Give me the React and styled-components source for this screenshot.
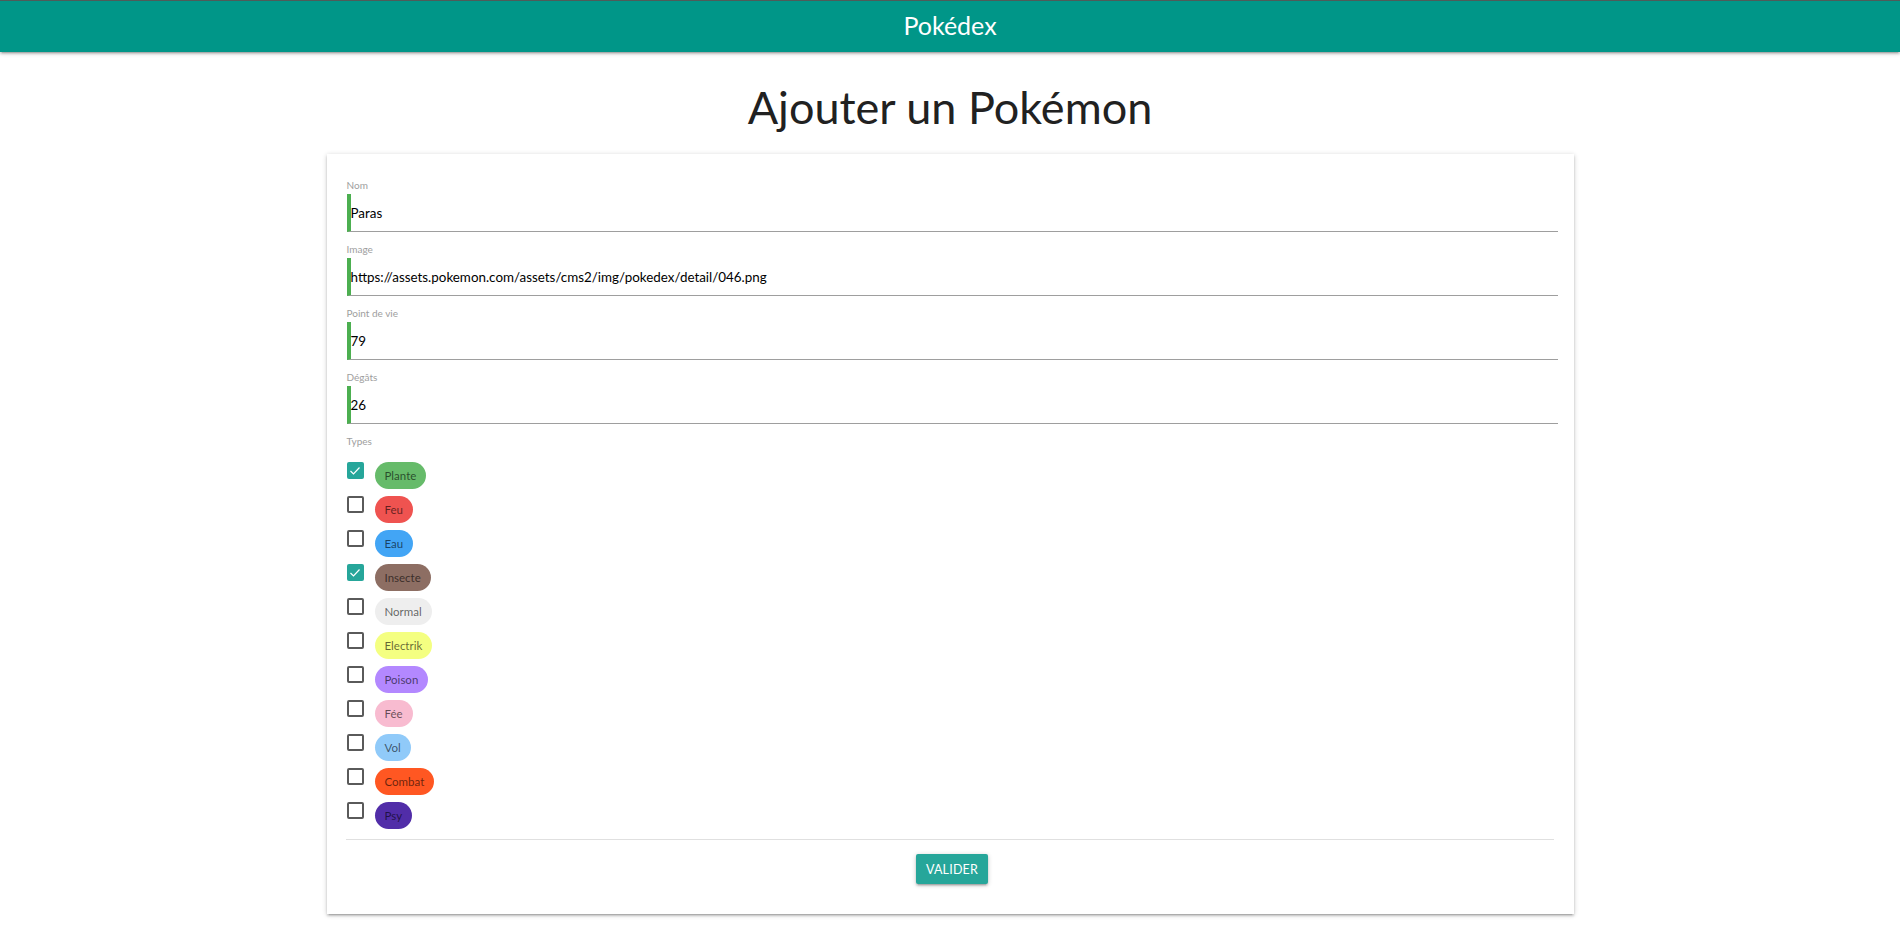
import React from "react";
import styled, { createGlobalStyle } from "styled-components";

const Global = createGlobalStyle`
  html, body { margin: 0; padding: 0; background: #fff; }
  body { font-family: Lato, "Open Sans", sans-serif; color: rgba(0,0,0,0.87); }
  * { box-sizing: border-box; }
`;

const Nav = styled.header`
  height: 52px;
  background: #009688;
  border-top: 1px solid #4e5b59;
  box-shadow: 0 2px 2px 0 rgba(0,0,0,.14), 0 3px 1px -2px rgba(0,0,0,.12), 0 1px 5px 0 rgba(0,0,0,.2);
  display: flex;
  align-items: center;
  justify-content: center;
`;

const Brand = styled.span`
  color: #fff;
  font-size: 25px;
  line-height: 1;
  margin-top: -2px;
`;

const Title = styled.h1`
  margin: 29px 0 20px;
  text-align: center;
  font-size: 45px;
  font-weight: 400;
  line-height: 53px;
  color: #212121;
`;

const Card = styled.form`
  width: 1247px;
  margin: 0 auto 30px;
  background: #fff;
  padding: 24px 16px 30px 20px;
  box-shadow: 0 2px 2px 0 rgba(0,0,0,.14), 0 3px 1px -2px rgba(0,0,0,.12), 0 1px 5px 0 rgba(0,0,0,.2);
`;

const Field = styled.div`
  margin-bottom: 10px;
`;

const Label = styled.div`
  font-size: 10px;
  line-height: 14px;
  color: #9e9e9e;
  margin-bottom: 2px;
`;

const Input = styled.div`
  height: 38px;
  border-left: 4px solid #4caf50;
  border-bottom: 1px solid #9e9e9e;
  display: flex;
  align-items: center;
  font-size: 13.4px;
  color: #000;
  padding-left: 0;
`;

const TypeList = styled.div`
  display: flex;
  flex-direction: column;
  gap: 7px;
  margin-top: 14px;
`;

const TypeRow = styled.label`
  display: flex;
  align-items: flex-start;
  gap: 11px;
`;

const Box = styled.span`
  width: 17px;
  height: 17px;
  border-radius: 2px;
  border: ${(p) => (p.$checked ? "none" : "2px solid #5a5a5a")};
  background: ${(p) => (p.$checked ? "#26a69a" : "transparent")};
  display: flex;
  align-items: center;
  justify-content: center;
`;

const Chip = styled.span`
  height: 27px;
  border-radius: 14px;
  padding: 0 10px;
  background: ${(p) => p.$bg};
  color: rgba(0,0,0,0.6);
  font-size: 11.5px;
  display: flex;
  align-items: center;
`;

const Divider = styled.hr`
  border: none;
  border-top: 1px solid #e0e0e0;
  margin: 10px 4px 0 -1px;
`;

const Footer = styled.div`
  display: flex;
  justify-content: center;
  padding-top: 14px;
`;

const Button = styled.button`
  height: 30px;
  padding: 0 10px;
  border: none;
  border-radius: 2px;
  background: #26a69a;
  color: #fff;
  font-family: inherit;
  font-size: 12.5px;
  text-transform: uppercase;
  letter-spacing: 0.2px;
  box-shadow: 0 2px 2px 0 rgba(0,0,0,.14), 0 3px 1px -2px rgba(0,0,0,.12), 0 1px 5px 0 rgba(0,0,0,.2);
`;

const fields = [
  ["Nom", "Paras"],
  ["Image", "https://assets.pokemon.com/assets/cms2/img/pokedex/detail/046.png"],
  ["Point de vie", "79"],
  ["Dégâts", "26"],
];

const types = [
  ["Plante", "#66bb6a", true],
  ["Feu", "#ef5350", false],
  ["Eau", "#42a5f5", false],
  ["Insecte", "#8d6e63", true],
  ["Normal", "#eeeeee", false],
  ["Electrik", "#f4ff81", false],
  ["Poison", "#b388ff", false],
  ["Fée", "#f8bbd0", false],
  ["Vol", "#90caf9", false],
  ["Combat", "#ff5722", false],
  ["Psy", "#512da8", false],
];

const Check = () => (
  <svg width="12" height="10" viewBox="0 0 12 10">
    <polyline points="1.5,5 4.5,8 10.5,1.5" fill="none" stroke="#fff" strokeWidth="1.2" />
  </svg>
);

export default function App() {
  return (
    <>
      <Global />
      <Nav>
        <Brand>Pokédex</Brand>
      </Nav>
      <Title>Ajouter un Pokémon</Title>
      <Card onSubmit={(e) => e.preventDefault()}>
        {fields.map(([l, v]) => (
          <Field key={l}>
            <Label>{l}</Label>
            <Input>{v}</Input>
          </Field>
        ))}
        <Label>Types</Label>
        <TypeList>
          {types.map(([name, bg, checked]) => (
            <TypeRow key={name}>
              <Box $checked={checked}>{checked && <Check />}</Box>
              <Chip $bg={bg}>{name}</Chip>
            </TypeRow>
          ))}
        </TypeList>
        <Divider />
        <Footer>
          <Button type="submit">Valider</Button>
        </Footer>
      </Card>
    </>
  );
}
